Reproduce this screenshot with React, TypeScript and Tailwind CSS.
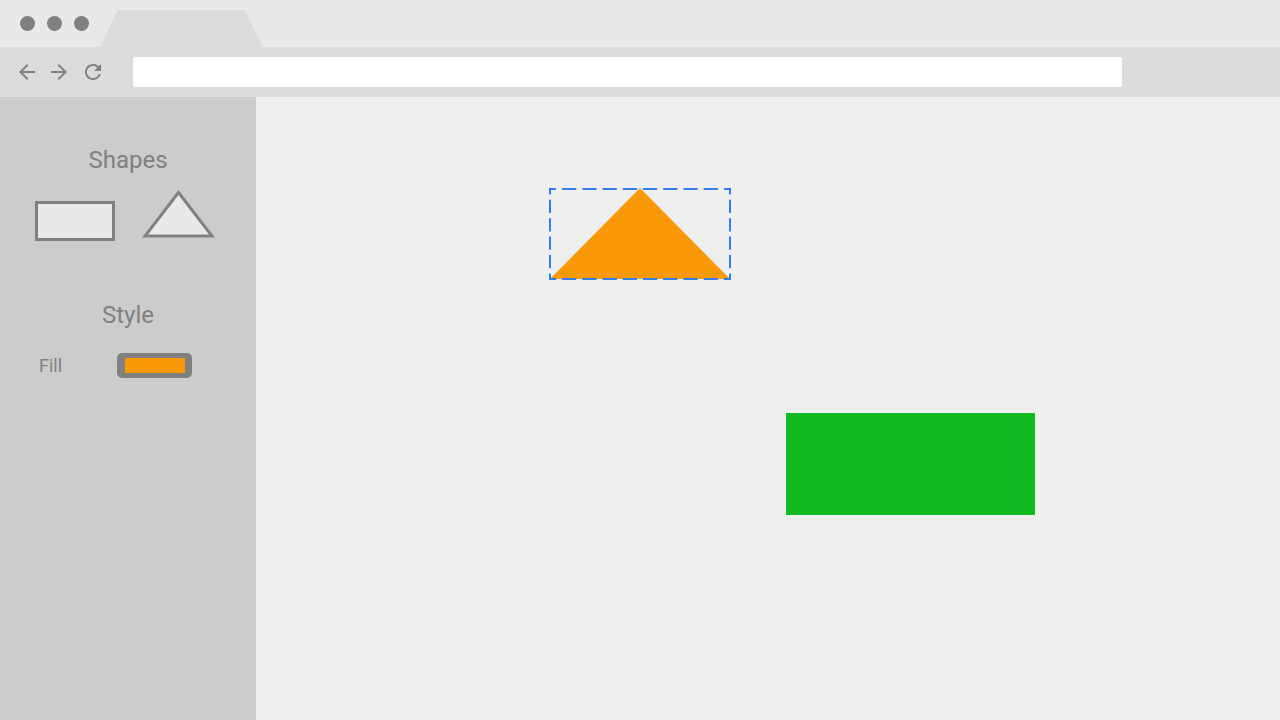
import { useState } from "react";
import { MdArrowBack, MdArrowForward, MdRefresh } from "react-icons/md";

function TabStrip() {
  return (
    <div className="flex h-[47px] items-end bg-[#e9e9e9]">
      <div className="flex h-full items-center gap-3 pl-5" aria-hidden="true">
        <span className="size-[15px] rounded-full bg-[#808080]" />
        <span className="size-[15px] rounded-full bg-[#808080]" />
        <span className="size-[15px] rounded-full bg-[#808080]" />
      </div>
      <svg className="ml-[11px] h-[37px] w-[163px]" viewBox="0 0 163 37" aria-hidden="true">
        <path d="M0 37 18 0H145L163 37Z" fill="#dcdcdc" />
      </svg>
    </div>
  );
}

function Toolbar() {
  return (
    <div className="flex h-[50px] items-center bg-[#dcdcdc] pr-[158px] pl-[15px] text-[#808080]">
      <button type="button" aria-label="Back" className="mr-2">
        <MdArrowBack className="size-6" />
      </button>
      <button type="button" aria-label="Forward" className="mr-[10px]">
        <MdArrowForward className="size-6" />
      </button>
      <button type="button" aria-label="Reload" className="mr-7">
        <MdRefresh className="size-6" />
      </button>
      <input
        type="text"
        aria-label="Address"
        className="h-[30px] min-w-0 flex-1 rounded-[2px] bg-white px-2 outline-none"
      />
    </div>
  );
}

function Sidebar({ fill }: { fill: string }) {
  return (
    <aside className="w-64 shrink-0 bg-[#cccccc] pt-[47px] text-[#808080]">
      <section>
        <h2 className="text-center text-2xl leading-8">Shapes</h2>
        <div className="mt-[14px] flex items-end gap-[27px] pl-[35px]">
          <button
            type="button"
            aria-label="Rectangle"
            className="h-10 w-20 border-3 border-[#808080] bg-[#e9e9e9]"
          />
          <button type="button" aria-label="Triangle" className="mb-[3px]">
            <svg className="h-12 w-[73px]" viewBox="0 0 73 48">
              <path d="M36.5 2.5 3 46H70Z" fill="#e9e9e9" stroke="#808080" strokeWidth="3" />
            </svg>
          </button>
        </div>
      </section>
      <section className="mt-[58px]">
        <h2 className="text-center text-2xl leading-8">Style</h2>
        <div className="mt-[22px] flex items-center pl-[39px]">
          <span id="fill-label" className="w-[78px] text-lg leading-6">
            Fill
          </span>
          <button
            type="button"
            aria-labelledby="fill-label"
            className="h-[25px] w-[75px] rounded-[5px] bg-[#808080] py-[5px] pr-[7px] pl-2"
          >
            <span className="block h-full" style={{ backgroundColor: fill }} />
          </button>
        </div>
      </section>
    </aside>
  );
}

function Canvas({ fill }: { fill: string }) {
  return (
    <main className="relative flex-1 overflow-hidden bg-[#efefef]">
      <svg className="absolute top-[91px] left-[293px] h-[92px] w-[182px]" viewBox="0 0 182 92">
        <path d="M91 0 181 91H1Z" fill={fill} />
        <g stroke="#2f80ed" strokeWidth="2">
          <path d="M0 1H182M0 91H182" strokeDasharray="14.2 6.02" strokeDashoffset="7.1" />
          <path d="M1 0V92M181 0V92" strokeDasharray="13.2 5.2" strokeDashoffset="6.6" />
        </g>
      </svg>
      <div className="absolute top-[316px] left-[530px] h-[102px] w-[249px] bg-[#10ba20]" />
    </main>
  );
}

export default function App() {
  const [fill] = useState("#f99907");
  return (
    <div className="flex min-h-screen flex-col font-['Roboto',sans-serif]">
      <header>
        <TabStrip />
        <Toolbar />
      </header>
      <div className="flex flex-1">
        <Sidebar fill={fill} />
        <Canvas fill={fill} />
      </div>
    </div>
  );
}
